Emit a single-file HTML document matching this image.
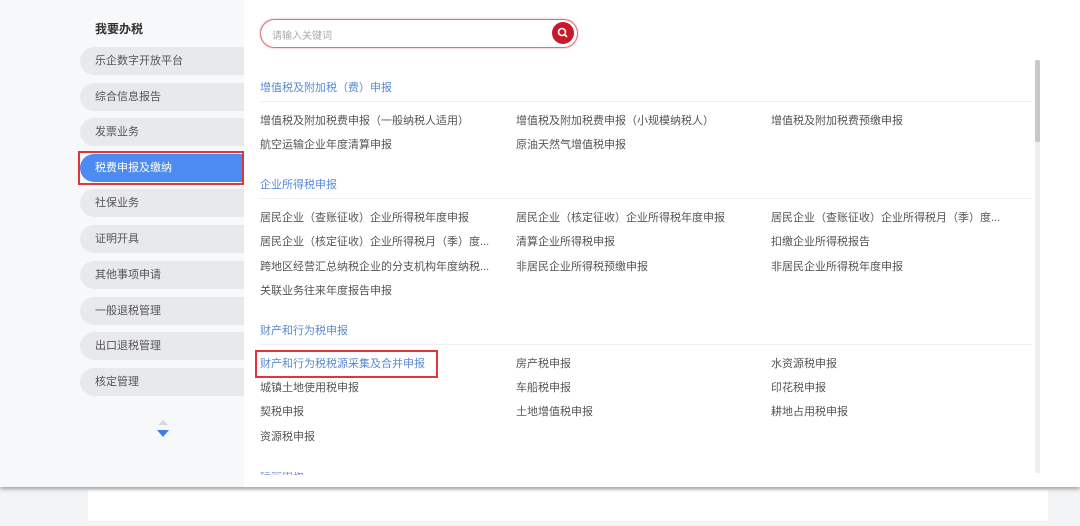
<!DOCTYPE html>
<html><head><meta charset="utf-8"><style>
*{margin:0;padding:0;box-sizing:border-box}
body{width:1080px;height:526px;overflow:hidden;background:#f3f4f6;font-family:"Liberation Sans","Noto Sans CJK SC",sans-serif;position:relative;font-size:11px;color:#444}
.top{position:absolute;left:0;top:0;width:1080px;height:487px;background:#fff;box-shadow:0 2px 4px rgba(0,0,0,.35)}
.side{position:absolute;left:0;top:0;width:244px;height:487px;background:#f7f8fa}
.ttl{position:absolute;left:95px;top:20px;font-weight:bold;font-size:12px;color:#333}
.it{position:absolute;left:80px;width:164px;height:28px;background:#e8e9ec;border-radius:14px 0 0 14px;padding-left:15px;line-height:28px;font-size:11px;color:#555}
.act{background:#4d8bf0;color:#fff}
.box{position:absolute;left:78px;top:151px;width:166px;height:34px;border:2px solid #e0353d}
.search{position:absolute;left:260px;top:19px;width:318px;height:29px;border:1.5px solid #d9707a;border-radius:15px;box-shadow:0 0 2px #e8a0a8}
.search span{position:absolute;left:11px;top:7px;color:#aaa;font-size:10px}
.btn{position:absolute;right:3px;top:2px;width:22px;height:22px;border-radius:50%;background:#c8182b}
.h{position:absolute;left:260px;color:#5a8ad2;font-size:11px}
.ln{position:absolute;left:260px;width:772px;height:1px;background:#f0f0f0}
.t{position:absolute;font-size:11px;color:#555;white-space:nowrap}
.sb{position:absolute;left:1035px;top:60px;width:5px;height:413px;background:#eee}
.th{position:absolute;left:1035px;top:60px;width:5px;height:82px;background:#c8c8c8;border-radius:2px}
.card{position:absolute;left:88px;top:490px;width:960px;height:31px;background:#fff}
</style></head><body>
<div class="card"></div>
<div class="top">
<div class="side">
<div class="ttl">我要办税</div>
<div class="it" style="top:47px">乐企数字开放平台</div>
<div class="it" style="top:83px">综合信息报告</div>
<div class="it" style="top:118px">发票业务</div>
<div class="it act" style="top:154px">税费申报及缴纳</div>
<div class="it" style="top:189px">社保业务</div>
<div class="it" style="top:225px">证明开具</div>
<div class="it" style="top:261px">其他事项申请</div>
<div class="it" style="top:297px">一般退税管理</div>
<div class="it" style="top:332px">出口退税管理</div>
<div class="it" style="top:368px">核定管理</div>
<div class="box"></div>
<svg style="position:absolute;left:155px;top:417px" width="16" height="22"><path d="M3 8 L8 3 L13 8Z" fill="#d5d8de"/><path d="M2 13 L14 13 L8 20Z" fill="#3f7fe0"/></svg>
</div>
<div class="search"><span>请输入关键词</span><div class="btn"><svg width="22" height="22"><circle cx="10" cy="10" r="3.5" fill="none" stroke="#fff" stroke-width="1.6"/><path d="M12.5 12.5 L15 15" stroke="#fff" stroke-width="1.8"/></svg></div></div>
<div class="h" style="top:79px">增值税及附加税（费）申报</div>
<div class="ln" style="top:101px"></div>
<div class="t" style="left:260px;top:112px">增值税及附加税费申报（一般纳税人适用）</div>
<div class="t" style="left:516px;top:112px">增值税及附加税费申报（小规模纳税人）</div>
<div class="t" style="left:771px;top:112px">增值税及附加税费预缴申报</div>
<div class="t" style="left:260px;top:136px">航空运输企业年度清算申报</div>
<div class="t" style="left:516px;top:136px">原油天然气增值税申报</div>
<div class="h" style="top:176px">企业所得税申报</div>
<div class="ln" style="top:198px"></div>
<div class="t" style="left:260px;top:209px">居民企业（查账征收）企业所得税年度申报</div>
<div class="t" style="left:516px;top:209px">居民企业（核定征收）企业所得税年度申报</div>
<div class="t" style="left:771px;top:209px">居民企业（查账征收）企业所得税月（季）度...</div>
<div class="t" style="left:260px;top:233px">居民企业（核定征收）企业所得税月（季）度...</div>
<div class="t" style="left:516px;top:233px">清算企业所得税申报</div>
<div class="t" style="left:771px;top:233px">扣缴企业所得税报告</div>
<div class="t" style="left:260px;top:258px">跨地区经营汇总纳税企业的分支机构年度纳税...</div>
<div class="t" style="left:516px;top:258px">非居民企业所得税预缴申报</div>
<div class="t" style="left:771px;top:258px">非居民企业所得税年度申报</div>
<div class="t" style="left:260px;top:282px">关联业务往来年度报告申报</div>
<div class="h" style="top:322px">财产和行为税申报</div>
<div class="ln" style="top:344px"></div>
<div class="t" style="left:260px;top:355px;color:#5a8ad2">财产和行为税税源采集及合并申报</div>
<div style="position:absolute;left:255px;top:350px;width:183px;height:28px;border:2px solid #e0353d"></div>
<div class="t" style="left:516px;top:355px">房产税申报</div>
<div class="t" style="left:771px;top:355px">水资源税申报</div>
<div class="t" style="left:260px;top:379px">城镇土地使用税申报</div>
<div class="t" style="left:516px;top:379px">车船税申报</div>
<div class="t" style="left:771px;top:379px">印花税申报</div>
<div class="t" style="left:260px;top:403px">契税申报</div>
<div class="t" style="left:516px;top:403px">土地增值税申报</div>
<div class="t" style="left:771px;top:403px">耕地占用税申报</div>
<div class="t" style="left:260px;top:428px">资源税申报</div>
<div style="position:absolute;left:260px;top:472px;width:48px;height:3px;overflow:hidden"><div class="t" style="left:0;top:-6px;color:#7a9ad8">综合申报</div></div>
<div class="sb"></div><div class="th"></div>
</div>
</body></html>
